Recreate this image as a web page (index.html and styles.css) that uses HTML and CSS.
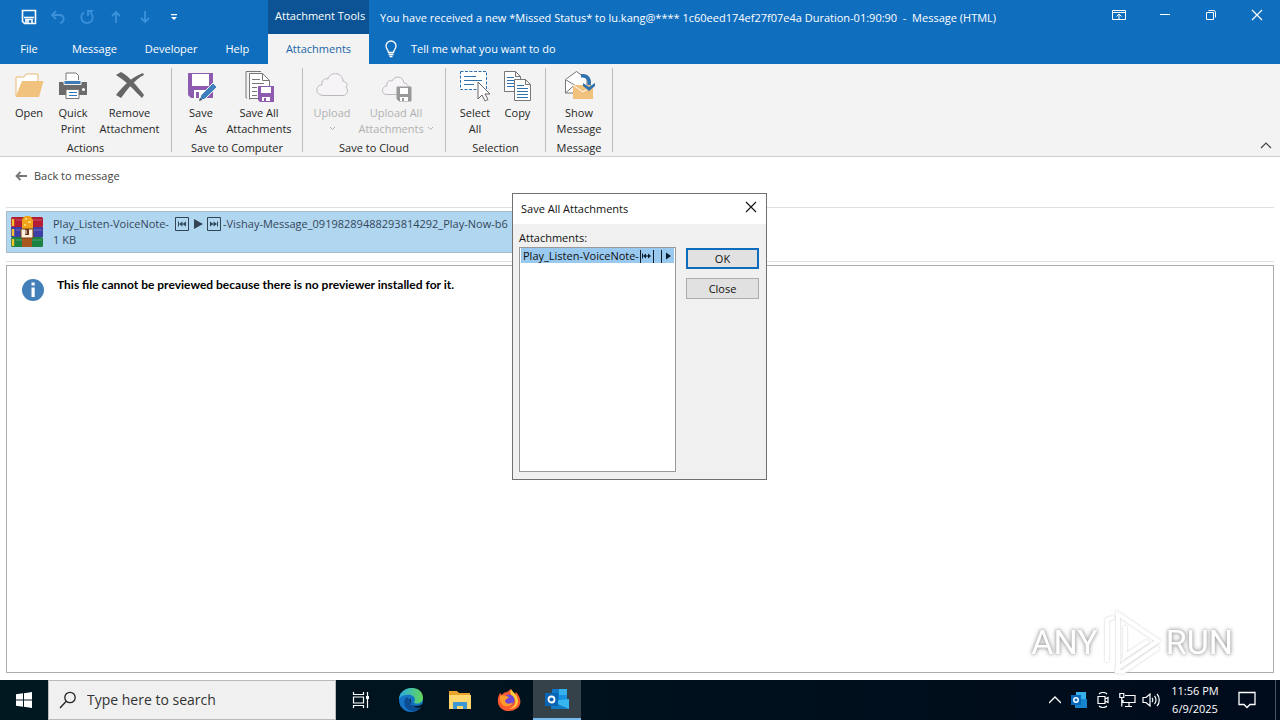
FILE: index.html
```html
<!DOCTYPE html>
<html lang="en">
<head>
<meta charset="utf-8">
<title>Message (HTML)</title>
<link rel="stylesheet" href="styles.css">
</head>
<body>
<div class="screen">
<header class="titlebar">
  <div class="title-left">
    <div class="quick-access">
      <button class="qat" aria-label="Save"><svg width="16" height="16" viewBox="0 0 16 16" fill="none" stroke="#fff" stroke-width="1.6"><path d="M1.500 1.500h13v13h-11l-2-2z"/><path d="M3 8.500h10"/><path d="M5 14v-3.500h6V14M7 11v3"/></svg></button>
      <button class="qat dim" aria-label="Undo"><svg width="16" height="16" viewBox="0 0 16 16" fill="none" stroke="currentColor" stroke-width="1.8"><path d="M6 2L2 6l4 4M2.500 6H9c6 0 6 7 1 8"/></svg></button>
      <button class="qat dim" aria-label="Redo"><svg width="16" height="16" viewBox="0 0 16 16" fill="none" stroke="currentColor" stroke-width="1.8"><path d="M5 3.500A5.700 5.700 0 1 0 11 3.500M9 7V2h5"/></svg></button>
      <button class="qat dim" aria-label="Previous"><svg width="16" height="16" viewBox="0 0 16 16" fill="none" stroke="currentColor" stroke-width="1.8"><path d="M8 14V3M4 7l4-4 4 4"/></svg></button>
      <button class="qat dim" aria-label="Next"><svg width="16" height="16" viewBox="0 0 16 16" fill="none" stroke="currentColor" stroke-width="1.8"><path d="M8 2v11M4 9l4 4 4-4"/></svg></button>
      <button class="qat" aria-label="Customize"><svg width="16" height="16" viewBox="0 0 16 16"><path d="M5 5h6v1.300H5zM5 8h6l-3 3z" fill="#fff"/></svg></button>
    </div>
    <nav class="tabs">
      <button class="tab file">File</button>
      <button class="tab">Message</button>
      <button class="tab">Developer</button>
      <button class="tab">Help</button>
    </nav>
  </div>
  <div class="context">
    <div class="context-label">Attachment Tools</div>
    <button class="tab active">Attachments</button>
  </div>
  <div class="title-right">
    <div class="title-row">
      <div class="title-text">You have received a new *Missed Status* to lu.kang@**** 1c60eed174ef27f07e4a Duration-01:90:90&nbsp; -&nbsp; Message (HTML)</div>
      <div class="window-buttons">
        <button aria-label="Ribbon display options"><svg width="14" height="12" viewBox="0 0 14 12" fill="none" stroke="#fff"><path d="M.5 1.500h13v9H.5zM.5 3.500h13M7 10V5M4.500 7.500L7 5l2.500 2.500"/></svg></button>
        <button aria-label="Minimize"><svg width="12" height="12" viewBox="0 0 12 12" stroke="#fff"><path d="M1 5.500h10"/></svg></button>
        <button aria-label="Restore"><svg width="12" height="12" viewBox="0 0 12 12" fill="none" stroke="#fff"><path d="M1.500 3.500h7v7h-7zM3.500 1.500h5a2 2 0 0 1 2 2v5"/></svg></button>
        <button aria-label="Close window"><svg width="12" height="12" viewBox="0 0 12 12" stroke="#fff" stroke-width="1.200"><path d="M1 1l10 10M11 1L1 11"/></svg></button>
      </div>
    </div>
    <button class="tell"><svg width="14" height="18" viewBox="0 0 14 18" fill="none" stroke="#fff" stroke-width="1.300"><path d="M4.500 12.500C4.500 10 2 9 2 6a5 5 0 0 1 10 0c0 3-2.500 4-2.500 6.500zM4.500 14.500h5M5.500 16.500h3"/></svg>Tell me what you want to do</button>
  </div>
</header>

<section class="ribbon">
  <div class="group">
    <div class="commands">
      <button class="cmd"><svg width="32" height="32" viewBox="0 0 32 32"><path d="M3 26V7h8l2-3h12v8" fill="#fff" stroke="#e9b976"/><path d="M2.500 27L9 11h21.500L26 27z" fill="#f0c27e"/></svg>Open</button>
      <button class="cmd"><svg width="32" height="32" viewBox="0 0 32 32"><path d="M9 11V3h10l2.500 2.500V11" fill="#fff" stroke="#777"/><path d="M2 12h28v13H2z" fill="#6b6b6b"/><path d="M7 10.500h17v4H7z" fill="#3b7cb7" stroke="#f3f3f3"/><path d="M9 19.500h13v9H9z" fill="#fff" stroke="#777"/><path d="M12 22.500h8M12 25.500h8" stroke="#2f78ba"/><circle cx="26.500" cy="19.500" r="1.500" fill="#fff"/></svg>Quick<br>Print</button>
      <button class="cmd remove"><svg width="32" height="32" viewBox="0 0 32 32"><path d="M2 5l5-3c8 4 16 14 23 23l-2 3C20 20 12 11 2 5zM29 3l1 2C21 9 13 20 7 28l-5-3C10 15 18 7 29 3z" fill="#666"/></svg>Remove<br>Attachment</button>
    </div>
    <div class="group-label">Actions</div>
  </div>
  <div class="group">
    <div class="commands">
      <button class="cmd"><svg width="32" height="32" viewBox="0 0 32 32"><path d="M3 3h25v25H6l-3-3z" fill="#8d5cb0"/><path d="M7 4h17v12H7zM9 20h11v8H9z" fill="#fff"/><path d="M11 22h3v6h-3z" fill="#8d5cb0"/><path d="M14 31l2-6 12-12 4 4-12 12z" fill="#3d80bb" stroke="#f3f3f3"/><path d="M14 31l1-3 2 2z" fill="#444"/></svg>Save<br>As</button>
      <button class="cmd all"><svg width="32" height="32" viewBox="0 0 32 32" fill="none"><path d="M4 28H3V1.500h15" stroke="#777"/><path d="M6.500 29.500V3.500h13l7 7v18h-20" fill="#fff" stroke="#777"/><path d="M19.500 3.500v7h7M9 9.500h8M9 13.500h12M9 17.500h5M9 21.500h5M9 25.500h5" stroke="#777"/><path d="M15 16h16v16H17l-2-2z" fill="#8d5cb0"/><path d="M18 17h10v6H18zM19 27h8v4h-8z" fill="#fff"/><path d="M21 28h2v3h-2z" fill="#8d5cb0"/></svg>Save All<br>Attachments</button>
    </div>
    <div class="group-label">Save to Computer</div>
  </div>
  <div class="group">
    <div class="commands">
      <button class="cmd" disabled><svg width="32" height="32" viewBox="0 0 32 32" fill="#f7f4f8" stroke="#bcb8bd"><path d="M7 25.500C-1 25-1 15 6 15 5 10 9 8 12 9c1-7 14-8 15 2 5 2 5 4 3 6 3 4 1 8-3 8.500z"/></svg>Upload<br><svg class="caret" width="7" height="5" viewBox="0 0 7 5" fill="none" stroke="currentColor"><path d="M1 1l2.500 2.500L6 1"/></svg></button>
      <button class="cmd upall" disabled><svg width="32" height="32" viewBox="0 0 32 32" fill="#f7f4f8" stroke="#bcb8bd"><path d="M7 24.500C1 25 1 16 7 16c-1-5 3-6 5-5 3-6 11-5 12 2 5 1 6 6 4 11.500z"/><path d="M17 17h14v14H19l-2-2z" fill="#999" stroke="#999"/><path d="M20 18h8v6h-8zM20 27h8v4h-8z" fill="#fff" stroke="none"/><path d="M22 28h2v3h-2z" fill="#999" stroke="none"/></svg>Upload All<br>Attachments <svg class="caret" width="7" height="5" viewBox="0 0 7 5" fill="none" stroke="currentColor"><path d="M1 1l2.500 2.500L6 1"/></svg></button>
    </div>
    <div class="group-label">Save to Cloud</div>
  </div>
  <div class="group">
    <div class="commands">
      <button class="cmd"><svg width="32" height="32" viewBox="0 0 32 32" fill="none"><path d="M1.500 1.500h26v18h-26z" fill="#fff" stroke="#2f72ae" stroke-dasharray="3 1.500"/><path d="M5 6.500h12M5 10.500h18M5 14.500h10" stroke="#2f72ae"/><path d="M19 12v17l4-4 3 6 3-1.500-3-5.500h5z" fill="#fff" stroke="#666"/></svg>Select<br>All</button>
      <button class="cmd copy"><svg width="32" height="32" viewBox="0 0 32 32" fill="#fff" stroke="#777"><path d="M2.500 1.500h11l5 5v15h-16zM13.500 1.500v5h5"/><path d="M5 7.500h7M5 10.500h7M5 13.500h7M5 16.500h7" stroke="#2f72ae"/><path d="M12.500 9.500h11l5 5v16h-16zM23.500 9.500v5h5"/><path d="M15 15.500h7M15 18.500h11M15 21.500h11M15 24.500h11M15 27.500h11" stroke="#2f72ae"/></svg>Copy</button>
    </div>
    <div class="group-label">Selection</div>
  </div>
  <div class="group">
    <div class="commands">
      <button class="cmd show"><svg width="32" height="32" viewBox="0 0 32 32" fill="none"><path d="M2.500 23V9.500l11-8L24 9v14z" fill="#fff" stroke="#777"/><path d="M2.500 23l9-8L3 10" stroke="#777"/><path d="M10 15h20v14H10z" fill="#f0c27e"/><path d="M10 15l10 7 10-7" stroke="#fff"/><path d="M18 6c7-1 9 4 8 9" stroke="#2f72ae" stroke-width="3.500"/><path d="M20 13l6 4 6-4v3l-6 5-6-5z" fill="#2f72ae"/></svg>Show<br>Message</button>
    </div>
    <div class="group-label">Message</div>
  </div>
  <button class="collapse" aria-label="Collapse the ribbon"><svg width="12" height="7" viewBox="0 0 12 7" fill="none" stroke="#444" stroke-width="1.200"><path d="M1 6l5-5 5 5"/></svg></button>
</section>

<main class="content">
  <button class="back"><svg width="12" height="10" viewBox="0 0 12 10" fill="none" stroke="#777" stroke-width="1.800"><path d="M12 5H2M5.500 1l-4 4 4 4"/></svg>Back to message</button>
  <div class="strip">
    <div class="attachment">
      <svg width="34" height="34" viewBox="0 0 34 34"><rect x="1" y="2" width="32" height="10" rx="1.500" fill="#b71c35"/><rect x="1" y="12" width="32" height="10" fill="#3d3fa6"/><rect x="1" y="22" width="32" height="10" rx="1.500" fill="#1b8241"/><path d="M3 4v7M3 14v7M3 24v7" stroke="#f2c230" stroke-width="2.500"/><path d="M6 5h26M6 15h26M6 25h26" stroke="#fff" stroke-opacity=".25"/><path d="M12 2h10v30H12z" fill="#a8581d"/><path d="M12 5l3-4h5l3 4v9H12z" fill="#f0a41b"/><path d="M15 4h2M18 7h3M14 10h2" stroke="#ffe27a" stroke-width="1.500"/><path d="M11 14h12v9H11z" fill="#fff3df" stroke="#764019"/><path d="M15 14h4v6h-4z" fill="#6b371a"/><path d="M16 15v4" stroke="#fff"/></svg>
      <div class="attachment-text">
        <div class="filename">Play_Listen-VoiceNote-<svg class="prev" width="14" height="14" viewBox="0 0 14 14"><path d="M.5.5h13v13H.5z" fill="none" stroke="#345"/><path d="M3 4.500h1v5H3zM4 7l3.500-2.500v5zM7.500 7L11 4.500v5z" fill="#345"/></svg><svg class="play" width="10" height="10" viewBox="0 0 10 10"><path d="M1 0l9 5-9 5z" fill="#345"/></svg><svg class="next" width="14" height="14" viewBox="0 0 14 14"><path d="M.5.5h13v13H.5z" fill="none" stroke="#345"/><path d="M10 4.500h1v5h-1zM10 7L6.500 4.500v5zM6.500 7L3 4.500v5z" fill="#345"/></svg>-Vishay-Message_09198289488293814292_Play-Now-b6</div>
        <div class="filesize">1 KB</div>
      </div>
    </div>
  </div>
  <div class="preview">
    <svg width="24" height="24" viewBox="0 0 24 24"><circle cx="12" cy="12" r="11" fill="#437fb9"/><path d="M10.500 4.500h3.200v3h-3.200zM10.500 9.500h3.200v9.500h-3.200z" fill="#fff"/></svg>
    <p class="notice">This file cannot be previewed because there is no previewer installed for it.</p>
  </div>
</main>

<footer class="taskbar">
  <button class="start" aria-label="Start"><svg width="16" height="16" viewBox="0 0 16 16" fill="#fff"><path d="M0 2.300l7-1V7.500H0zM8 1.200L16 0v7.500H8zM0 8.500h7v6.200l-7-1zM8 8.500h8V16l-8-1.200z"/></svg></button>
  <label class="search"><svg width="18" height="18" viewBox="0 0 18 18" fill="none" stroke="#222" stroke-width="1.300"><circle cx="11" cy="6.500" r="5.200"/><path d="M7 10.500L1 17"/></svg><input type="text" placeholder="Type here to search" aria-label="Type here to search"></label>
  <div class="apps">
    <button class="app first" aria-label="Task view"><svg width="18" height="16" viewBox="0 0 18 16" fill="none" stroke="#fff" stroke-width="1.200"><path d="M1.500 0v2.500h10V0M1.500 16v-2.500h10V16M1.500 5h10v6h-10zM15.500 0v16"/><path d="M14 4h3v3h-3z" fill="#fff" stroke="none"/></svg></button>
    <button class="app" aria-label="Edge"><svg width="24" height="24" viewBox="0 0 24 24"><defs><linearGradient id="e1" x1="0" y1="0" x2="1" y2="0"><stop offset="0" stop-color="#2aa9e0"/><stop offset="1" stop-color="#63d85a"/></linearGradient></defs><circle cx="12" cy="12" r="12" fill="#1473c4"/><path d="M0 11C1-3 24-4 24 10c0 6-8 7-9 4 3-5-3-8-7-7-4 0-7 2-8 4z" fill="url(#e1)"/><path d="M8 9c-6 5-1 14 6 14 4 0 7-2 8-5-7 3-13-1-11-6z" fill="#0c4c92"/><path d="M12 10c-3 3 0 8 5 8 3 0 5-1 6-2 1 1 0 2-1 3-6 2-12-2-10-9z" fill="#00131b"/></svg></button>
    <button class="app" aria-label="File Explorer"><svg width="22" height="20" viewBox="0 0 22 20"><path d="M0 1h8l2 2h11v15H0z" fill="#e9a52b"/><path d="M0 5h22v14H0z" fill="#ffd970"/><path d="M4 19v-7h14v7h-4v-3H8v3z" fill="#3c98d5"/></svg></button>
    <button class="app" aria-label="Firefox"><svg width="24" height="24" viewBox="0 0 24 24"><path d="M3 5l2 2c1-2 3-3 5-3l4-3c1 3 3 3 4 5l1-2c9 10 3 19-7 19S-2 14 3 5z" fill="#ff5a2f"/><path d="M14 1c1 3 7 6 7 12 0 5-4 8-9 8 8-3 8-9 3-13-2-2-2-5-1-7z" fill="#ffcf3a"/><circle cx="12" cy="12" r="5.500" fill="#7047d2"/><path d="M3 8c4-2 6 0 9 1-1 2-4 2-4 4 1 4 6 3 8 1-1 6-12 6-13-2z" fill="#ff9b28"/></svg></button>
    <button class="app current" aria-label="Outlook"><svg width="24" height="22" viewBox="0 0 24 22"><path d="M7 1h15v13H7z" fill="#1178c8"/><path d="M14 1h8v6h-8z" fill="#35b2ed"/><path d="M14 7h8v6h-8z" fill="#1490df"/><path d="M6 13l18-2v10H6z" fill="#36b5ef"/><path d="M6 13l18 8H6z" fill="#147bc5"/><path d="M0 5h13v13H0z" fill="#0865b6"/><circle cx="6.500" cy="11.500" r="3" fill="none" stroke="#fff" stroke-width="1.800"/></svg></button>
  </div>
  <div class="tray">
    <button aria-label="Show hidden icons"><svg width="12" height="8" viewBox="0 0 12 8" fill="none" stroke="#fff" stroke-width="1.300"><path d="M0 7l6-6 6 6"/></svg></button>
    <button aria-label="Outlook status"><svg width="16" height="16" viewBox="0 0 16 16"><path d="M5 0h10v9H5z" fill="#35b2ed"/><path d="M4 7h12v9H4z" fill="#1783cc"/><path d="M0 3h10v10H0z" fill="#0868bb"/><circle cx="5" cy="8" r="2.200" fill="none" stroke="#fff" stroke-width="1.500"/></svg></button>
    <button aria-label="Meet now"><svg width="14" height="16" viewBox="0 0 14 16" fill="none" stroke="#fff" stroke-width="1.200"><path d="M2 4.500h7v7H2zM9 7l3-1.500v5L9 9M3 2c2-2 6-2 8 0M3 14c2 2 6 2 8 0"/></svg></button>
    <button aria-label="Network"><svg width="17" height="16" viewBox="0 0 17 16" fill="none" stroke="#fff" stroke-width="1.200"><path d="M6 3.500h10v7H4V8M10 10.500v4M6 14.500h7M.8 1.500h4v4h-4zM2.800 5.500v9"/></svg></button>
    <button aria-label="Volume"><svg width="18" height="16" viewBox="0 0 18 16" fill="none" stroke="#fff" stroke-width="1.200"><path d="M1 5.500h3l4-3.500v12L4 10.500H1zM10 6c1 1 1 3 0 4M12.500 4c2 2 2 6 0 8M15 2c3 3 3 9 0 12"/></svg></button>
    <div class="clock">11:56 PM<br>6/9/2025</div>
    <button class="notes" aria-label="Notifications"><svg width="18" height="18" viewBox="0 0 18 18" fill="none" stroke="#fff" stroke-width="1.300"><path d="M1 1.500h16v12h-5l-3 3-3-3H1z"/></svg></button>
  </div>
  <button class="show-desktop" aria-label="Show desktop"></button>
</footer>

<section class="dialog" role="dialog" aria-labelledby="dlg-title">
  <div class="dialog-head"><span id="dlg-title">Save All Attachments</span><button aria-label="Close dialog"><svg width="12" height="12" viewBox="0 0 12 12" stroke="#111" stroke-width="1.100"><path d="M1 1l10 10M11 1L1 11"/></svg></button></div>
  <div class="dialog-body">
    <div class="list-column">
      <div id="list-label">Attachments:</div>
      <div class="listbox" role="listbox" aria-labelledby="list-label" tabindex="0">
        <div class="option" role="option" aria-selected="true">Play_Listen-VoiceNote-<svg width="35" height="14" viewBox="0 0 35 14" fill="#0b1c2b"><path d="M1 1h1v13H1zM14 1h1v13h-1zM22 1h1v13h-1zM3 4.500h1v5H3zM4 7l3-2.500v5zM7 6.500h2v1H7zM12 7L9 4.500v5zM27 3.500l5 3.500-5 3.500z"/></svg></div>
      </div>
    </div>
    <div class="dialog-buttons"><button class="default">OK</button><button>Close</button></div>
  </div>
</section>

<div class="watermark"><span>ANY</span><svg width="62" height="64" viewBox="0 0 62 64" fill="none" stroke="#fff" stroke-width="4"><path d="M17 4l40 27-40 27zM6 52V10l7-3M24 16v30l23-15M14 61l8 1 36-25"/></svg><span>RUN</span></div>
</div>
</body>
</html>
```
FILE: styles.css
```css
* { box-sizing: border-box; }
body { margin: 0; font: 11px/16px "Open Sans", "Noto Sans", sans-serif; color: #262626; }
button { font: inherit; color: inherit; background: none; border: 0; padding: 0; margin: 0; }
svg { flex: none; }
.screen { position: relative; min-height: 100vh; display: flex; flex-direction: column; background: #fff; overflow: hidden; }

.titlebar { display: flex; background: #106ebe; color: #fff; }
.title-left { width: 268px; }
.quick-access { display: flex; height: 34px; padding-left: 14px; align-items: center; }
.qat { width: 29px; height: 32px; display: flex; align-items: center; justify-content: center; }
.dim { color: #3b91da; }
.tabs { display: flex; height: 30px; }
.tab { padding: 0 14px; }
.tab.file { width: 58px; }
.context { width: 101px; display: flex; flex-direction: column; }
.context-label { height: 34px; padding: 8px 0 0 7px; background: #0b5394; white-space: nowrap; }
.tab.active { height: 30px; padding: 0; background: #f3f3f3; color: #1766a8; }
.title-right { flex: 1; min-width: 0; }
.title-row { display: flex; height: 34px; justify-content: space-between; }
.title-text { padding: 10px 0 0 11px; white-space: nowrap; }
.window-buttons { display: flex; height: 30px; }
.window-buttons button { width: 46px; display: flex; align-items: center; justify-content: center; }
.tell { height: 30px; padding-left: 15px; display: flex; align-items: center; gap: 13px; }

.ribbon { display: flex; background: #f3f3f3; border-bottom: 1px solid #d0d0d0; }
.group { display: flex; flex-direction: column; margin: 4px 0; padding: 0 7px; height: 84px; border-right: 1px solid #bdbdbd; }
.commands { display: flex; flex: 1; }
.cmd { width: 44px; text-align: center; white-space: nowrap; align-self: flex-start; }
.cmd > svg:first-child { display: block; margin: 2px auto 3px; }
.cmd.remove { width: 69px; }
.cmd.all { width: 72px; }
.cmd.upall { width: 84px; }
.cmd.copy { width: 41px; }
.cmd.show { width: 52px; }
.cmd:disabled { color: #b1b1b1; }
.caret { vertical-align: 2px; }
.group-label { text-align: center; white-space: nowrap; height: 12px; }
.collapse { margin-left: auto; align-self: flex-end; padding: 0 8px 3px; }

.content { flex: 1; display: flex; flex-direction: column; padding: 0 6px 7px; }
.back { align-self: flex-start; height: 38px; padding-left: 9px; display: flex; align-items: center; gap: 7px; color: #444; }
.strip { margin-top: 12px; padding: 3px 0 8px; border-top: 1px solid #e0e0e0; border-bottom: 1px solid #e0e0e0; }
.attachment { display: flex; align-items: center; gap: 9px; width: 540px; height: 42px; padding: 0 3px; background: #b1d6f0; border: 1px solid #a9bccb; color: #33475b; white-space: nowrap; overflow: hidden; }
.filename { display: flex; align-items: center; }
.prev { margin-left: 6px; }
.play { margin: 0 4px; }
.next { margin-right: 2px; }
.preview { flex: 1; display: flex; align-items: flex-start; gap: 12px; margin-top: 3px; padding: 12px 14px; border: 1px solid #ababab; }
.notice { margin: 0; color: #000; font-family: Lato, "Open Sans", sans-serif; font-size: 12px; line-height: 14px; font-weight: 700; }

.taskbar { display: flex; height: 40px; background: linear-gradient(90deg, #001820, #000b1b); color: #fff; }
.start { width: 48px; display: flex; align-items: center; justify-content: center; }
.search { width: 288px; display: flex; align-items: center; gap: 10px; padding: 0 10px; background: #f0f0f0; border: 1px solid #bbb; }
.search input { flex: 1; min-width: 0; border: 0; padding: 0; background: none; outline: 0; font: 14px/20px "Open Sans", sans-serif; }
.search input::placeholder { color: #333; opacity: 1; }
.apps { display: flex; flex: 1; }
.app { width: 49px; display: flex; align-items: center; justify-content: center; }
.app.first { width: 50px; }
.app.current { width: 48px; background: #35424a; border-bottom: 2px solid #76b9ed; }
.tray { display: flex; align-items: center; padding-right: 8px; }
.tray button { width: 24px; height: 40px; display: flex; align-items: center; justify-content: center; }
.clock { width: 64px; text-align: center; line-height: 18px; }
.tray .notes { width: 40px; }
.show-desktop { width: 5px; border-left: 1px solid #4a5560; }

.dialog { position: absolute; left: 512px; top: 193px; width: 255px; color: #111; background: #f0f0f0; border: 1px solid #707070; }
.dialog-head { display: flex; align-items: center; justify-content: space-between; height: 30px; padding: 0 9px 0 8px; background: #fff; }
.dialog-body { display: flex; gap: 10px; padding: 6px 7px 7px 6px; }
.list-column { width: 157px; }
.listbox { height: 225px; padding: 0 1px; margin-top: 1px; background: #fff; border: 1px solid #999; }
.option { display: flex; align-items: center; height: 15px; padding-left: 2px; background: #99c9ef; white-space: nowrap; overflow: hidden; }
.dialog-buttons { flex: 1; display: flex; flex-direction: column; gap: 9px; padding-top: 18px; }
.dialog-buttons button { height: 21px; background: #e1e1e1; border: 1px solid #adadad; }
.dialog-buttons .default { border: 2px solid #0f6cbd; }

.watermark { position: absolute; right: 47px; bottom: 46px; display: flex; align-items: center; gap: 3px; color: #fff; font: 34px/60px Roboto, sans-serif; text-shadow: 0 0 4px #999; filter: drop-shadow(0 0 1px #ccc); }
```
